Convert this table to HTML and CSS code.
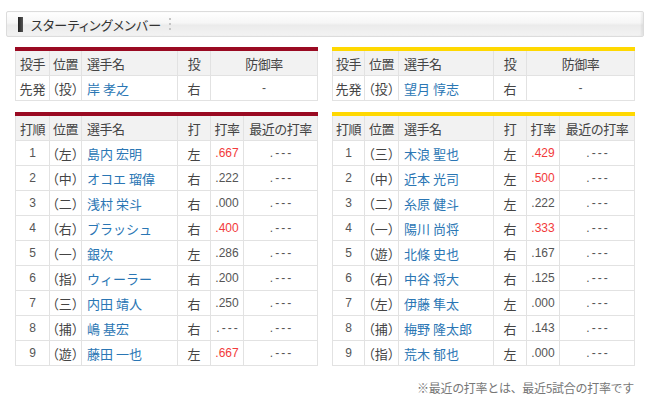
FILE: index.html
```html
<!DOCTYPE html>
<html lang="ja">
<head>
<meta charset="utf-8">
<link rel="stylesheet" href="styles.css">
</head>
<body>
<div class="page">
  <div class="titlebar">
    <span class="mark"></span>
    <span class="title">スターティングメンバー</span>
    <span class="dots"><i></i><i></i><i></i></span>
  </div>
  <div class="teams">
    <div class="team home">
      <table class="pitcher">
        <colgroup><col class="c1"><col class="c2"><col class="c3"><col class="c4"><col class="c5"><col class="c6"></colgroup>
        <tr class="head"><th>投手</th><th>位置</th><th class="nm">選手名</th><th>投</th><th colspan="2">防御率</th></tr>
        <tr><td>先発</td><td class="pos">（投）</td><td class="nm"><a>岸 孝之</a></td><td>右</td><td colspan="2" class="num">-</td></tr>
      </table>
      <table class="batters">
        <colgroup><col class="c1"><col class="c2"><col class="c3"><col class="c4"><col class="c5"><col class="c6"></colgroup>
        <tr class="head"><th>打順</th><th>位置</th><th class="nm">選手名</th><th>打</th><th>打率</th><th>最近の打率</th></tr>
        <tr><td class="num">1</td><td class="pos">（左）</td><td class="nm"><a>島内 宏明</a></td><td>左</td><td class="num red">.667</td><td class="num dash">.---</td></tr>
        <tr><td class="num">2</td><td class="pos">（中）</td><td class="nm"><a>オコエ 瑠偉</a></td><td>右</td><td class="num">.222</td><td class="num dash">.---</td></tr>
        <tr><td class="num">3</td><td class="pos">（二）</td><td class="nm"><a>浅村 栄斗</a></td><td>右</td><td class="num">.000</td><td class="num dash">.---</td></tr>
        <tr><td class="num">4</td><td class="pos">（右）</td><td class="nm"><a>ブラッシュ</a></td><td>右</td><td class="num red">.400</td><td class="num dash">.---</td></tr>
        <tr><td class="num">5</td><td class="pos">（一）</td><td class="nm"><a>銀次</a></td><td>左</td><td class="num">.286</td><td class="num dash">.---</td></tr>
        <tr><td class="num">6</td><td class="pos">（指）</td><td class="nm"><a>ウィーラー</a></td><td>右</td><td class="num">.200</td><td class="num dash">.---</td></tr>
        <tr><td class="num">7</td><td class="pos">（三）</td><td class="nm"><a>内田 靖人</a></td><td>右</td><td class="num">.250</td><td class="num dash">.---</td></tr>
        <tr><td class="num">8</td><td class="pos">（捕）</td><td class="nm"><a>嶋 基宏</a></td><td>右</td><td class="num dash">.---</td><td class="num dash">.---</td></tr>
        <tr><td class="num">9</td><td class="pos">（遊）</td><td class="nm"><a>藤田 一也</a></td><td>左</td><td class="num red">.667</td><td class="num dash">.---</td></tr>
      </table>
    </div>
    <div class="team away">
      <table class="pitcher">
        <colgroup><col class="c1"><col class="c2"><col class="c3"><col class="c4"><col class="c5"><col class="c6"></colgroup>
        <tr class="head"><th>投手</th><th>位置</th><th class="nm">選手名</th><th>投</th><th colspan="2">防御率</th></tr>
        <tr><td>先発</td><td class="pos">（投）</td><td class="nm"><a>望月 惇志</a></td><td>右</td><td colspan="2" class="num">-</td></tr>
      </table>
      <table class="batters">
        <colgroup><col class="c1"><col class="c2"><col class="c3"><col class="c4"><col class="c5"><col class="c6"></colgroup>
        <tr class="head"><th>打順</th><th>位置</th><th class="nm">選手名</th><th>打</th><th>打率</th><th>最近の打率</th></tr>
        <tr><td class="num">1</td><td class="pos">（三）</td><td class="nm"><a>木浪 聖也</a></td><td>左</td><td class="num red">.429</td><td class="num dash">.---</td></tr>
        <tr><td class="num">2</td><td class="pos">（中）</td><td class="nm"><a>近本 光司</a></td><td>左</td><td class="num red">.500</td><td class="num dash">.---</td></tr>
        <tr><td class="num">3</td><td class="pos">（二）</td><td class="nm"><a>糸原 健斗</a></td><td>左</td><td class="num">.222</td><td class="num dash">.---</td></tr>
        <tr><td class="num">4</td><td class="pos">（一）</td><td class="nm"><a>陽川 尚将</a></td><td>右</td><td class="num red">.333</td><td class="num dash">.---</td></tr>
        <tr><td class="num">5</td><td class="pos">（遊）</td><td class="nm"><a>北條 史也</a></td><td>右</td><td class="num">.167</td><td class="num dash">.---</td></tr>
        <tr><td class="num">6</td><td class="pos">（右）</td><td class="nm"><a>中谷 将大</a></td><td>右</td><td class="num">.125</td><td class="num dash">.---</td></tr>
        <tr><td class="num">7</td><td class="pos">（左）</td><td class="nm"><a>伊藤 隼太</a></td><td>左</td><td class="num">.000</td><td class="num dash">.---</td></tr>
        <tr><td class="num">8</td><td class="pos">（捕）</td><td class="nm"><a>梅野 隆太郎</a></td><td>右</td><td class="num">.143</td><td class="num dash">.---</td></tr>
        <tr><td class="num">9</td><td class="pos">（指）</td><td class="nm"><a>荒木 郁也</a></td><td>左</td><td class="num">.000</td><td class="num dash">.---</td></tr>
      </table>
      <p class="note">※最近の打率とは、最近5試合の打率です</p>
    </div>
  </div>
</div>
</body>
</html>
```

FILE: styles.css
```css
html, body {
  margin: 0;
  padding: 0;
  background: #fff;
}
body {
  font-family: "Liberation Sans", "Noto Sans CJK JP", sans-serif;
  color: #333;
}
.page {
  padding: 11px 6px 0 6px;
  width: 638px;
}
.titlebar {
  height: 24px;
  border: 1px solid #dcdcdc;
  border-radius: 2px;
  background: linear-gradient(#ffffff, #f6f6f6 45%, #ebebeb 55%, #f3f3f3);
  display: flex;
  align-items: center;
  box-shadow: inset -2px 0 2px rgba(0,0,0,0.06);
}
.mark {
  width: 5px;
  height: 15px;
  margin-left: 11px;
  background: linear-gradient(90deg, #222, #555);
}
.title {
  margin-left: 8px;
  font-family: "Noto Sans CJK JP", sans-serif;
  font-feature-settings: "palt";
  font-size: 13px;
  letter-spacing: 0.2px;
  color: #333;
}
.dots {
  display: flex;
  flex-direction: column;
  gap: 3px;
  margin-left: 8px;
}
.dots i {
  display: block;
  width: 2px;
  height: 2px;
  background: #c4c4c4;
}
.teams {
  display: flex;
  gap: 15px;
  margin: 10px 0 0 9px;
}
.team {
  width: 302px;
  display: flex;
  flex-direction: column;
  gap: 11px;
}
table {
  width: 302px;
  border-collapse: collapse;
  table-layout: fixed;
  font-size: 13px;
}
.home table { border-top: 4px solid #9a0a22; }
.away table { border-top: 4px solid #ffd800; }
.home .c1 { width: 34px; }
.home .c2 { width: 32px; }
.home .c3 { width: 96px; }
.home .c4 { width: 33px; }
.home .c5 { width: 33px; }
.home .c6 { width: 74px; }
.away .c1 { width: 32px; }
.away .c2 { width: 34px; }
.away .c3 { width: 95px; }
.away .c4 { width: 33px; }
.away .c5 { width: 33px; }
.away .c6 { width: 75px; }
th, td {
  border: 1px solid #e2e2e2;
  height: 24px;
  padding: 0;
  text-align: center;
  font-weight: normal;
  white-space: nowrap;
  overflow: visible;
  font-family: "Noto Sans CJK JP", sans-serif;
  color: #444;
}
th {
  background: #f2f2f2;
  letter-spacing: -0.5px;
}
td.pos {
  font-feature-settings: "palt";
  letter-spacing: 0.3px;
}
.nm {
  text-align: left;
  padding-left: 5px;
}
td a {
  color: #2a76b4;
  text-decoration: none;
}
td.num {
  font-family: "Liberation Sans", sans-serif;
  font-size: 12px;
  color: #555;
}
td.dash {
  letter-spacing: 2px;
  text-indent: 2px;
}
td.red { color: #f23a3a; }
.note {
  margin: 2px 0 0 0;
  text-align: right;
  font-family: "Noto Sans CJK JP", sans-serif;
  font-size: 12px;
  color: #777;
  letter-spacing: -0.3px;
}
```
